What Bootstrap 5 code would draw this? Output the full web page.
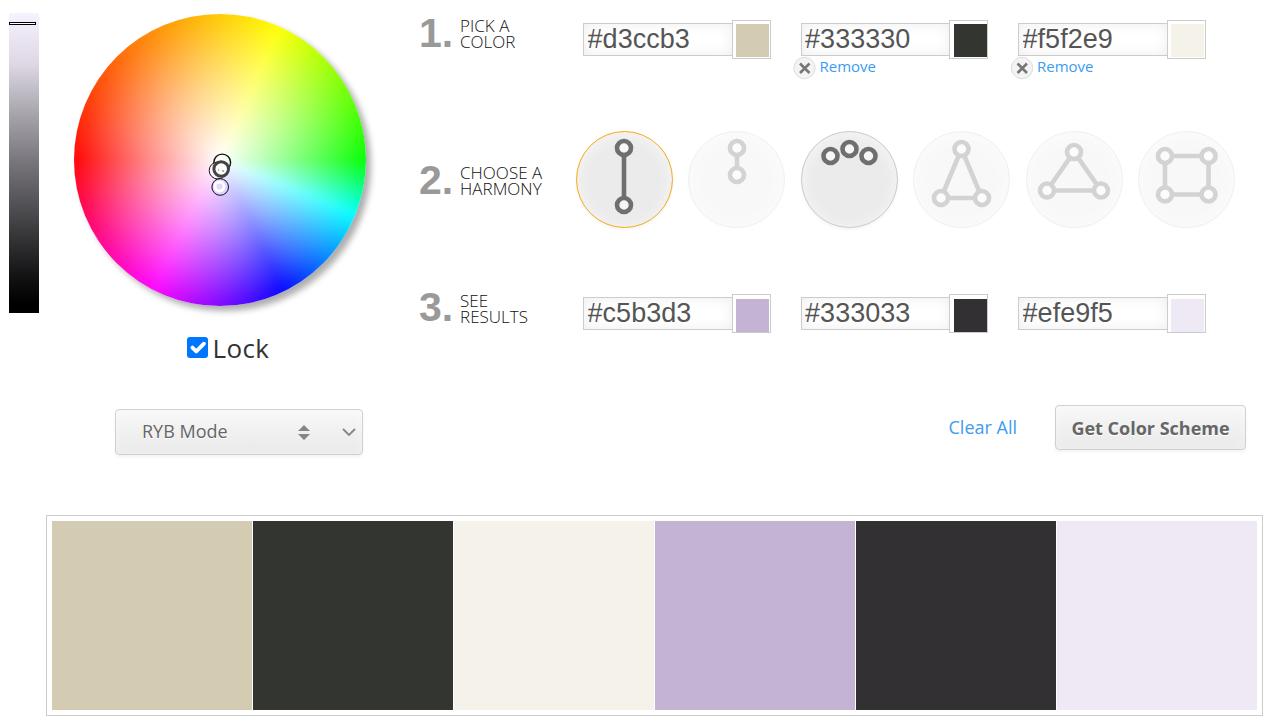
<!DOCTYPE html>
<html lang="en">
<head>
<meta charset="utf-8">
<meta name="viewport" content="width=device-width, initial-scale=1">
<title>Color Scheme Calculator</title>
<link href="https://cdn.jsdelivr.net/npm/bootstrap@5.3.0/dist/css/bootstrap.min.css" rel="stylesheet">
<style>
body{font-family:"Open Sans","Noto Sans",sans-serif;color:#333;background:#fff;overflow:hidden}
.tool{height:515px}
.picker{width:419px;padding:13px 0 0 9px}
.shade{width:30px;height:300px;background:linear-gradient(#f7f2ff,#ddd8e4 17%,#a9a6ae 33%,#77757b 50%,#3f3e41 71%,#121213 88%,#000 97%)}
.shade-knob{left:0;top:9px;width:27px;height:3px;border:1px solid #000;background:#fff}
.wheel{width:292px;height:292px;margin:1px 0 0 35.4px;border-radius:50%;box-shadow:5px 5px 6px rgba(0,0,0,.32)}
.disc{inset:0;border-radius:50%;overflow:hidden}
.disc::before{content:"";position:absolute;inset:-14px;filter:blur(4px);
 background:radial-gradient(circle 146px,#fff 0,rgba(255,255,255,.53) 50%,rgba(255,255,255,.04) 98%),conic-gradient(from 270deg,#f00 0,#ff0 114deg,#0f0 180deg,#0ff 202deg,#00f 244deg,#f0f 297deg,#f00 360deg)}
.markers{left:131px;top:134px}
.lock{height:42px;margin:13px 0 0 178px}
.lock .form-check-input{width:21px;height:21px;border:0;border-radius:3px;margin:0;background-color:#0075ff;background-size:122%}
.lock label{font-size:26px;line-height:36px;margin:2px 0 0 4.5px;letter-spacing:.4px}
.soft-btn{border:1px solid #d0d0d0;border-radius:4px;background:linear-gradient(#f8f8f8,#e9e9e9);box-shadow:inset 0 0 12px rgba(255,255,255,.4),0 2px 3px rgba(0,0,0,.05);text-shadow:0 1px 0 #fff;color:#666}
.mode{width:248px;height:46px;margin:41px 0 0 106px;padding-left:26px;font-size:18px}
.mode span{margin-top:-2px}
.steps{width:853px}
.step-num{width:41px;font:bold 41px/46px "Liberation Sans",sans-serif;color:#999}
.step-name{font-size:17px;line-height:16px;font-weight:300;color:#111;letter-spacing:.03px}
.step-head{width:164px}
.slot{width:217.5px}
.hex{width:150px;height:33px;margin-top:3px;padding:0 3.6px;border:1px solid #ccc;border-radius:0;font:27px/29px "Liberation Sans",sans-serif;color:#555;background:#fff;box-shadow:inset 0 0 14px rgba(0,0,0,.07)}
.chip{width:39px;height:39px;margin-left:-1px;padding:3px;border:1px solid #ccc;background:#fff}
.chip div{width:33px;height:33px}
.low .chip{padding-top:4px}
.mid .chip{padding-left:4px;margin-left:-1.5px}
.link-blue{color:#3b9cf2;text-decoration:none}
.remove{font-size:15px;line-height:20px;margin:-3px 0 0 -8px}
.remove svg{margin-top:1px}
.harmony{width:97px;height:97px;margin-right:15.5px;border:1px solid #ccc;border-radius:50%;background:#ebebeb;box-shadow:inset 0 2px 16px rgba(255,255,255,.6),0 2px 3px rgba(0,0,0,.04);color:#6e6f71}
.harmony svg{display:block;margin:-1px;fill:none;stroke:currentColor;stroke-width:4.6}
.harmony.picked{border-color:#f9ab17}
.harmony.faded{opacity:.3}
.harmony circle{fill:#f6f6f6}
.palette{width:1217px;height:201px;margin-left:46px;padding:5px;gap:1px;border:1px solid #ccc}
.palette div{width:200px;height:189px}
.c1{background:#d3ccb3}.c2{background:#333530}.c3{background:#f5f2e9}.c4{background:#c5b3d3}.c5{background:#333033}.c6{background:#efe9f5}
.r1{height:131px;padding-top:20px}.r2{height:163px}.r3{height:111px}
</style>
</head>
<body>
<main class="tool d-flex">
 <section class="picker flex-shrink-0">
  <div class="d-flex">
   <div class="shade position-relative"><div class="shade-knob position-absolute"></div></div>
   <div class="wheel position-relative">
    <div class="disc position-absolute"></div>
    <svg class="markers position-absolute" width="32" height="52" fill="none" stroke="#111">
     <circle cx="17.200" cy="14.500" r="8.400" stroke-width="1.4"/>
     <circle cx="12.700" cy="22.500" r="8.500" fill="#fff" fill-opacity=".55"/>
     <circle cx="16.200" cy="21" r="7.300" stroke="#414443" stroke-width="3" fill="#fff"/>
     <path d="M13.200 22h1M17.200 23h2" stroke="#555"/>
     <circle cx="15.200" cy="39" r="8.300" fill="#ddd4ff"/>
     <circle cx="14.500" cy="38.500" r="4.500" stroke="#fff" stroke-width="2.8" fill="#e5d5ff"/>
    </svg>
   </div>
  </div>
  <div class="lock d-flex align-items-center">
   <input class="form-check-input" type="checkbox" id="lock" checked><label for="lock">Lock</label>
  </div>
  <div class="mode soft-btn d-flex align-items-center">
   <span>RYB Mode</span>
   <svg class="ms-auto" width="14" height="18"><path d="M7 2l6 6H1zM7 17l6-6H1z" fill="#858585"/></svg>
   <svg style="margin:0 5px 0 30px" width="16" height="12"><path d="M2 3l6 6 6-6" fill="none" stroke="#858585" stroke-width="1.8"/></svg>
  </div>
 </section>
 <section class="steps">
  <div class="r1 d-flex align-items-start">
   <div class="step-head d-flex"><div class="step-num" style="margin-top:-10px">1.</div><div class="step-name" style="margin-top:-2px">PICK A<br>COLOR</div></div>
   <div class="slot"><div class="d-flex"><input class="hex" value="#d3ccb3" aria-label="Color 1"><div class="chip"><div class="c1"></div></div></div></div>
   <div class="slot mid"><div class="d-flex"><input class="hex" value="#333330" aria-label="Color 2"><div class="chip"><div class="c2"></div></div></div>
    <div class="remove d-flex"><svg width="23" height="23"><circle cx="11.500" cy="11" r="10.700" fill="#f3f3f3" stroke="#ddd"/><path d="M7 6.500l9.500 9.500M16.500 6.500l-9.500 9.500" stroke="#777" stroke-width="2.6"/></svg><a class="link-blue ms-1" href="#">Remove</a></div></div>
   <div class="slot"><div class="d-flex"><input class="hex" value="#f5f2e9" aria-label="Color 3"><div class="chip"><div class="c3"></div></div></div>
    <div class="remove d-flex"><svg width="23" height="23"><circle cx="12" cy="11" r="10.700" fill="#f3f3f3" stroke="#ddd"/><path d="M7.500 6.500l9.500 9.500M17 6.500l-9.500 9.500" stroke="#777" stroke-width="2.6"/></svg><a class="link-blue ms-1" href="#">Remove</a></div></div>
  </div>
  <div class="r2 d-flex align-items-start">
   <div class="step-head d-flex" style="width:156.700px;padding-top:27px"><div class="step-num" style="margin-top:-1px">2.</div><div class="step-name" style="margin-top:7px">CHOOSE A<br>HARMONY</div></div>
   <div class="harmony picked"><svg width="97" height="97"><path d="M48 17v57"/><circle cx="48" cy="17" r="7"/><circle cx="48" cy="74" r="7"/></svg></div>
   <div class="harmony faded"><svg width="97" height="97"><path d="M49 17v27"/><circle cx="49" cy="17" r="7"/><circle cx="49" cy="44" r="7"/></svg></div>
   <div class="harmony"><svg width="97" height="97"><circle cx="29.500" cy="25" r="7"/><circle cx="48.500" cy="18" r="7"/><circle cx="67.500" cy="25" r="7"/></svg></div>
   <div class="harmony faded"><svg width="97" height="97"><path d="M48.500 18L28 67h41z"/><circle cx="48.500" cy="18" r="7"/><circle cx="28" cy="67" r="7"/><circle cx="69" cy="67" r="7"/></svg></div>
   <div class="harmony faded"><svg width="97" height="97"><path d="M48 21L21 59.500h54z"/><circle cx="48" cy="21" r="7"/><circle cx="21" cy="59.500" r="7"/><circle cx="75" cy="59.500" r="7"/></svg></div>
   <div class="harmony faded"><svg width="97" height="97"><path d="M27 25h43.500v38.500H27z"/><circle cx="27" cy="25" r="7"/><circle cx="70.500" cy="25" r="7"/><circle cx="27" cy="63.500" r="7"/><circle cx="70.500" cy="63.500" r="7"/></svg></div>
  </div>
  <div class="r3 low d-flex align-items-start">
   <div class="step-head d-flex"><div class="step-num" style="margin-top:-10px">3.</div><div class="step-name" style="margin-top:-1px">SEE<br>RESULTS</div></div>
   <div class="slot d-flex"><input class="hex" value="#c5b3d3" aria-label="Result 1"><div class="chip"><div class="c4"></div></div></div>
   <div class="slot mid d-flex"><input class="hex" value="#333033" aria-label="Result 2"><div class="chip"><div class="c5"></div></div></div>
   <div class="slot d-flex"><input class="hex" value="#efe9f5" aria-label="Result 3"><div class="chip"><div class="c6"></div></div></div>
  </div>
  <div class="d-flex justify-content-end align-items-center" style="padding-right:26px">
   <a class="link-blue" href="#" style="font-size:18px;margin-right:38px">Clear All</a>
   <button class="soft-btn fw-bold px-0 pb-0" style="width:191px;height:45px;font-size:18px;padding-top:2px">Get Color Scheme</button>
  </div>
 </section>
</main>
<div class="palette d-flex"><div class="c1"></div><div class="c2"></div><div class="c3"></div><div class="c4"></div><div class="c5"></div><div class="c6"></div></div>
<script src="https://cdn.jsdelivr.net/npm/bootstrap@5.3.0/dist/js/bootstrap.bundle.min.js"></script>
</body>
</html>
